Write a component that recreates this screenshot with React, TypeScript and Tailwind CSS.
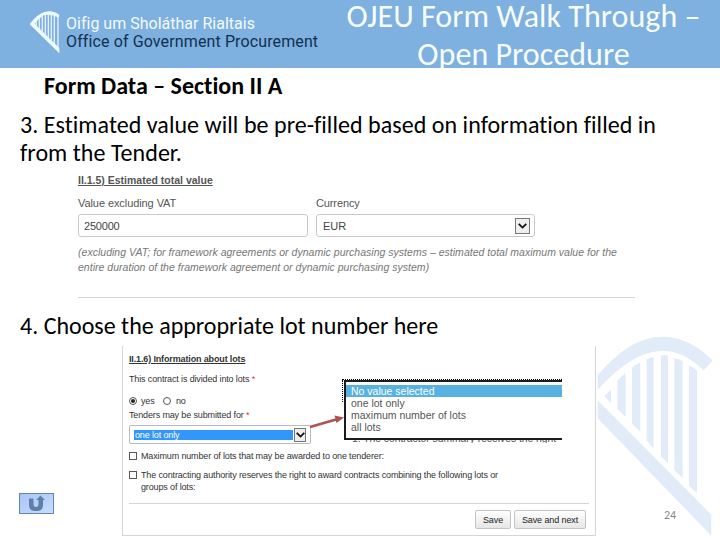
import { ReactNode } from 'react';

const lotOptions = ['one lot only', 'maximum number of lots', 'all lots'];

const HarpLogo = () => (
  <svg width="32" height="44" viewBox="0 0 96 132" className="shrink-0">
    <path d="M2 43 C22 14 45 2 65 4 Q82 6 91 14 L90 24 Q66 10 44 16 Q31 24 17 41 L91 114 L91 130 Z" fill="#f0fbff" />
    <path
      d="M22 34 V50 M31 25 V59 M40 19 V68 M49 15 V77 M58 13 V86 M67 13 V95 M76 15 V103 M87 19 V114"
      stroke="#e4f2fc"
      strokeWidth="4"
    />
  </svg>
);

const HarpWatermark = () => (
  <svg width="160" height="240" viewBox="0 0 480 720" className="absolute left-[560px] top-[300px]" fill="#e2ecf9">
    <path d="M113 226 C180 148 240 110 310 110 C365 110 420 140 458 182 L431 211 C390 172 352 153 310 153 C235 153 175 204 113 269 Z" />
    <path d="M113 301 L454 644 V707 L113 355 Z" />
    <path d="M133 289 L153 269 V309 Z" />
    <path d="M172 242 Q184 228 197 219 V351 L172 327 Z" />
    <path d="M216 203 Q228 193 241 187 V396 L216 371 Z" />
    <path d="M260 178 Q270 173 281 171 V446 L260 421 Z" />
    <path d="M303 166 H324 V490 L303 469 Z" />
    <path d="M343 174 Q357 177 368 183 V535 L343 510 Z" />
    <path d="M387 196 Q401 203 411 212 V580 L387 557 Z" />
  </svg>
);

const SelectArrow = ({ className = '' }: { className?: string }) => (
  <span className={`flex items-center justify-center border border-[#777] bg-[#eee] ${className}`}>
    <svg width="9" height="6" viewBox="0 0 9 6" fill="none" stroke="#111" strokeWidth="1.8">
      <path d="M0.7 0.8 L4.5 4.6 L8.3 0.8" />
    </svg>
  </span>
);

const Button = ({ children, className = '' }: { children: ReactNode; className?: string }) => (
  <button
    className={`h-[19px] whitespace-nowrap rounded-[2px] border border-[#c4c4c4] bg-gradient-to-b from-white to-[#e6e6e6] text-[9px] leading-[16px] tracking-[-0.1px] text-[#222] ${className}`}
  >
    {children}
  </button>
);

const Header = () => (
  <header className="flex h-[68px] bg-[#7eb0e0]">
    <div className="flex w-[327px] pl-[29px] pt-[10px]">
      <HarpLogo />
      <div className="ml-[5px] mt-[5px] whitespace-nowrap font-['Roboto',sans-serif] text-[16px] leading-[18px]">
        <div className="tracking-[0.01px] text-[#f2fbff]">Oifig um Sholáthar Rialtais</div>
        <div className="tracking-[0.12px] text-[#12304f]">Office of Government Procurement</div>
      </div>
    </div>
    <h1 className="-mt-[2px] w-[393px] whitespace-nowrap text-center text-[32px] leading-[38px] tracking-[0.04px] text-[#f7fdff]">
      OJEU Form Walk Through –<br />
      Open Procedure
    </h1>
  </header>
);

const EstimatedValue = () => (
  <section className="ml-[78px] mt-[6px] h-[125px] w-[557px] whitespace-nowrap border-b border-[#d4d4d4] font-['Liberation_Sans',sans-serif] text-[11px] text-[#555]">
    <h3 className="text-[10.5px] font-bold leading-[14px] underline">II.1.5) Estimated total value</h3>
    <div className="mt-[9px] flex gap-2 leading-[14px]">
      <div className="w-[230px]">
        <div className="tracking-[-0.08px]">Value excluding VAT</div>
        <div className="mt-[4px] h-[23px] rounded-[3px] border border-[#c8c8c8] bg-white pl-[5px] leading-[22px] tracking-[-0.2px] text-[#444]">250000</div>
      </div>
      <div className="w-[219px]">
        <div className="tracking-[-0.12px]">Currency</div>
        <div className="mt-[4px] flex h-[23px] items-center justify-between rounded-[3px] border border-[#c8c8c8] bg-white pl-1.5 pr-1 text-[#444]">
          EUR
          <SelectArrow className="h-[16px] w-[15px]" />
        </div>
      </div>
    </div>
    <p className="mt-2 text-[10.5px] italic leading-[15px] tracking-[0.022px] text-[#777]">
      (excluding VAT; for framework agreements or dynamic purchasing systems – estimated total maximum value for the
      <br />
      entire duration of the framework agreement or dynamic purchasing system)
    </p>
  </section>
);

const LotsMenu = () => (
  <div className="absolute left-[221px] top-[34px] h-[60px] w-[218px] border-y-2 border-l-2 border-[#1c1a1c] bg-white pt-[3px] text-[10.5px] leading-3 tracking-normal text-[#555]">
    <div className="absolute -left-[4px] -top-[3px] w-[220px] border-t border-dotted border-black" />
    <div className="absolute -left-[4px] -top-[2px] h-[22px] border-l border-dotted border-black" />
    <div className="bg-[#58b2e1] pl-[5px] text-white">No value selected</div>
    {lotOptions.map((option) => (
      <div key={option} className="pl-[5px]">{option}</div>
    ))}
    <div className="absolute left-[6px] top-[58px] h-[3px] w-[210px] overflow-hidden text-[10.3px]">
      <div className="-mt-[7px]">1. The contractor summary receives the right</div>
    </div>
  </div>
);

const LotsPanel = () => (
  <section className="relative ml-[122px] mt-[6px] h-[190px] w-[474px] whitespace-nowrap border border-t-0 border-[#d5d5d5] bg-white px-[6px] pt-[7px] font-['Liberation_Sans',sans-serif] text-[9px] leading-3 tracking-[-0.14px] text-[#333]">
    <h3 className="font-bold tracking-[-0.14px] underline">II.1.6) Information about lots</h3>
    <div className="mt-[8px]">This contract is divided into lots <span className="text-[#d33]">*</span></div>
    <div className="mt-[10px] flex items-center">
      <span className="flex size-[8px] items-center justify-center rounded-full border border-[#555]">
        <span className="size-1 rounded-full bg-[#222]" />
      </span>
      <span className="ml-[4px] w-[22px]">yes</span>
      <span className="size-[8px] rounded-full border border-[#555]" />
      <span className="ml-[5px]">no</span>
    </div>
    <div className="mt-[2px]">Tenders may be submitted for <span className="text-[#d33]">*</span></div>
    <div className="mt-[4px] flex h-[19px] w-[182px] items-center justify-between rounded-[2px] border border-[#bbb] bg-white px-1">
      <div className="h-[10px] w-[159px] bg-[#3297fb] pl-[1px] leading-[10px] text-white">one lot only</div>
      <SelectArrow className="h-[14px] w-[12px]" />
    </div>
    <div className="mt-[6px] flex items-start gap-[4px]">
      <span className="mt-[2px] size-[8px] border border-[#555]" />
      <span>Maximum number of lots that may be awarded to one tenderer:</span>
    </div>
    <div className="mt-[7px] flex items-start gap-[4px]">
      <span className="mt-[2px] size-[8px] border border-[#555]" />
      <span>
        The contracting authority reserves the right to award contracts combining the following lots or
        <br />
        groups of lots:
      </span>
    </div>
    <div className="mt-[10px] flex justify-end gap-[3px] border-t border-[#d5d5d5] pr-[3px] pt-[6px]">
      <Button className="w-[36px]">Save</Button>
      <Button className="w-[72px]">Save and next</Button>
    </div>
    <LotsMenu />
    <svg width="40" height="18" viewBox="0 0 40 18" className="absolute left-[186px] top-[67px]">
      <path d="M1 14 L27 6.5" stroke="#ae5153" strokeWidth="2.4" />
      <path d="M25.5 2.5 L35 4.5 L27.5 10 Z" fill="#ae5153" />
    </svg>
  </section>
);

const ReturnButton = () => (
  <button className="absolute left-[19px] top-[493px] flex h-[21px] w-[35px] items-center justify-center border border-[#6485ad] bg-gradient-to-br from-[#a9c6f8] to-[#c8dcff]">
    <svg width="16" height="17" viewBox="0 0 16 17" fill="#5f7fab">
      <path d="M0 3.5 H4.5 V9 Q4.5 12 7 12 Q9.5 12 9.5 9 V5 H7 L11.5 0.5 L16 5 H14 V10 Q14 16 8 16 H6 Q0 16 0 10 Z" />
    </svg>
  </button>
);

export default function App() {
  return (
    <main className="relative h-[540px] w-[720px] overflow-hidden bg-white font-['Carlito','Lato',sans-serif] text-black [font-variant-ligatures:none]">
      <HarpWatermark />
      <div className="relative">
        <Header />
        <h2 className="ml-[44px] mt-[4px] whitespace-nowrap text-[24px] font-bold leading-7">Form Data – Section II A</h2>
        <p className="ml-[20px] mt-[11px] whitespace-nowrap text-[24px] leading-7 tracking-[0.045px]">
          3. Estimated value will be pre-filled based on information filled in
          <br />
          from the Tender.
        </p>
        <EstimatedValue />
        <p className="ml-[20px] mt-[14px] whitespace-nowrap text-[24px] leading-7">4. Choose the appropriate lot number here</p>
        <LotsPanel />
      </div>
      <ReturnButton />
      <span className="absolute left-[664px] top-[507px] text-[12px] leading-4 text-[#888]">24</span>
    </main>
  );
}
